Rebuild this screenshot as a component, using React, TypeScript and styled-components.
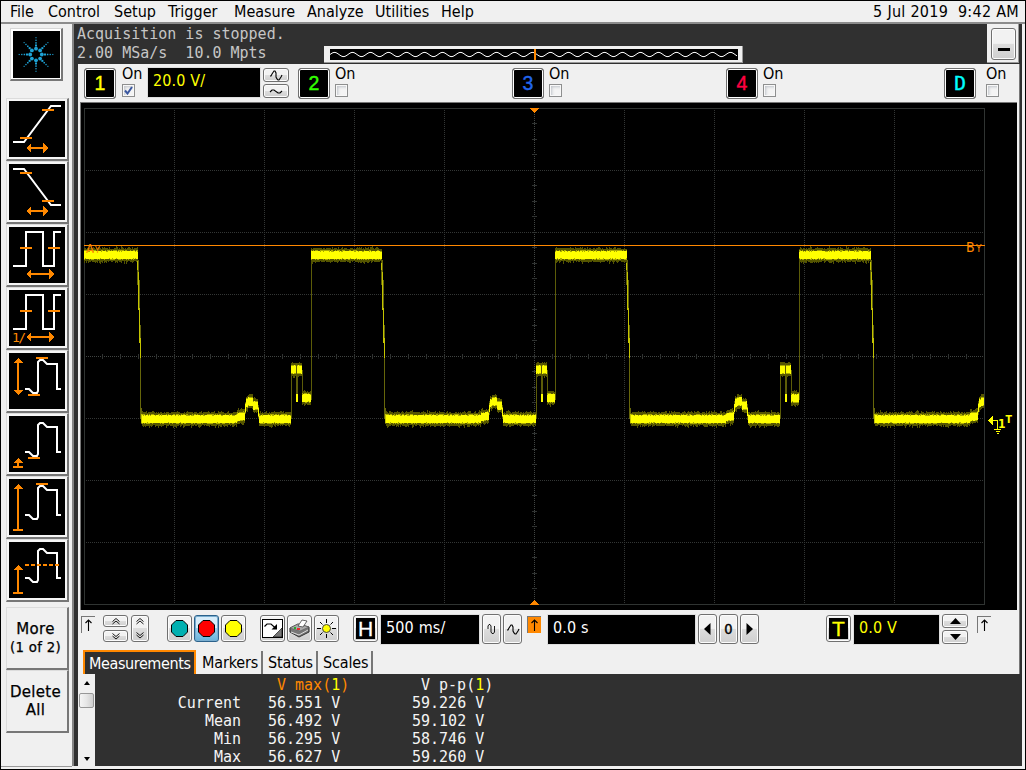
import React from 'react';
import styled, { createGlobalStyle, css } from 'styled-components';

const ui = '"DejaVu Sans Condensed", "DejaVu Sans", sans-serif';
const mono = '"DejaVu Sans Mono", monospace';
const orange = '#ff8800';
const dark = '#303030';
const face = '#f0f0f0';

const Global = createGlobalStyle`
  *, *::before, *::after { box-sizing: border-box; }
  body { margin: 0; background: #000; overflow: hidden; }
  svg { display: block; flex: none; }
`;

const Frame = styled.div`
  width: 1026px; height: 770px; display: flex; flex-direction: column;
  border: 1px solid #000; background: ${face};
  font: 16px/20px ${ui}; font-stretch: condensed; color: #000; white-space: pre;
`;
const MenuBar = styled.nav`
  height: 23px; flex: none; display: grid; align-items: center;
  grid-template-columns: 38px 66px 54px 66px 73px 68px 66px 1fr auto;
  padding: 0 6px 0 9px; border-bottom: 2px solid #8c8c8c;
`;
const MenuItem = styled.span<{ $ls?: number }>`
  letter-spacing: ${p => p.$ls ?? 0}px; line-height: 21px;
`;
const Body = styled.div`height: 742px; display: flex; flex: none;`;
const Sidebar = styled.aside`
  width: 71px; height: 743px; padding: 4px 0 0 5px; flex: none; border-bottom: 1px solid #999;
`;
const Main = styled.main`
  width: 950px; height: 742px; background: ${dark}; border-left: 2px solid #858585;
  display: flex; flex-direction: column;
`;
const LogoButton = styled.div`
  width: 53px; height: 53px; margin: 0 0 17px 4px; padding: 2px;
  border: 1px solid #d8d8d8; border-right: 2px solid #777; border-bottom: 2px solid #777;
  background: #fff;
`;
const SideButton = styled.div`
  width: 63px; height: 63px; padding: 2px; background: #f6f6f6;
  border: 1px solid #dcdcdc; border-right: 2px solid #777; border-bottom: 2px solid #777;
`;
const SideIcon = styled.div`width: 56px; height: 56px; background: #000;`;
const TextButton = styled.div<{ $gap?: boolean }>`
  width: 63px; height: 63px; margin-top: ${p => (p.$gap ? 5 : 0)}px; padding: 12px 3px 0 0;
  border: 1px solid #dcdcdc; border-right: 2px solid #777; border-bottom: 2px solid #777;
  text-align: center; font: 15px/18px "DejaVu Sans", sans-serif; -webkit-text-stroke: 0.25px #000;
  letter-spacing: 0.3px;
`;
const Small = styled.div`font-size: 13.3px; line-height: 20px;`;

const Status = styled.header`height: 40px; flex: none; display: flex;`;
const StatusText = styled.div`
  width: 250px; padding: 1px 0 0 3px; font: 15px/19px ${mono}; color: #c6c6c6;
`;
const Overview = styled.div`
  width: 419px; height: 17px; margin-top: 22px; padding: 3px 0 0 6px;
  background: ${face}; border-right: 1px solid #999; border-bottom: 1px solid #999;
`;
const MinimizeBox = styled.div`
  width: 32px; height: 39px; margin-left: 244px; padding: 4px; background: ${face};
  border-right: 1px solid #999; border-bottom: 1px solid #999;
`;
const Panel = styled.section`
  width: 942px; height: 610px; margin-left: 4px; flex: none; background: ${face};
  border-right: 1px solid #777;
`;
const bevel = css`
  border: 1px solid #707070; border-radius: 3px;
  box-shadow: inset 0 0 0 1px #fcfcfc;
  background: linear-gradient(#f2f2f2 0 48%, #dddddd 50%, #cfcfcf);
`;
const PushButton = styled.div<{ $w: number; $h: number; $ml?: number; $active?: boolean }>`
  ${bevel}
  width: ${p => p.$w}px; height: ${p => p.$h}px; margin-left: ${p => p.$ml ?? 0}px;
  display: flex; align-items: center; justify-content: center; flex: none;
  ${p => p.$active && css`
    border-color: #2c628b; box-shadow: inset 0 0 0 1px #7aaed0;
    background: linear-gradient(#d8edfa 0 48%, #9ed0ee 50%, #68b3db);
  `}
`;
const ChannelBar = styled.div`height: 38px; display: flex; padding: 4px 0 0 6px;`;
const ChannelButton = styled.div<{ $c: string; $ml?: number; $mono?: boolean }>`
  width: 32px; height: 31px; margin-left: ${p => p.$ml ?? 0}px; flex: none;
  border: 1px solid #707070; border-radius: 3px; background: #000;
  box-shadow: inset 0 0 0 1px #fff; color: ${p => p.$c};
  font: 19.5px/29px ${p => (p.$mono ? mono : '"Liberation Sans", Arial, sans-serif')};
  text-align: center; -webkit-text-stroke: 0.4px ${p => p.$c};
`;
const Enable = styled.div<{ $ml: number }>`
  width: 26px; margin-left: ${p => p.$ml}px; margin-top: -5px; flex: none; line-height: 21px;
`;
const Check = styled.div`
  width: 13px; height: 13px; border: 1px solid #8e8f8f; padding: 1px;
  background: #f4f4f4; box-shadow: inset 0 0 0 1px #f8f8f8, inset 2px 2px 3px #bfc3c9;
`;
const Readout = styled.div<{ $w: number; $h?: number; $ml?: number; $c?: string }>`
  width: ${p => p.$w}px; height: ${p => p.$h ?? 29}px; margin-left: ${p => p.$ml ?? 0}px;
  flex: none; background: #000; color: ${p => p.$c ?? '#fff'}; padding: 1px 5px;
  box-shadow: 0 0 0 1px #dedede; line-height: 23px; letter-spacing: 0.15px;
`;
const Stack = styled.div<{ $ml: number; $gap: number }>`
  margin-left: ${p => p.$ml}px; display: flex; flex-direction: column; gap: ${p => p.$gap}px;
`;
const ScopeArea = styled.div`
  width: 937px; height: 508px; margin-left: 2px; background: #000;
  border-left: 1px solid #777; border-top: 1px solid #777;
`;
const Toolbar = styled.div`height: 40px; display: flex; align-items: flex-start; padding: 4px 0 0 3px;`;
const Lower = styled.div`margin-top: 1px; display: flex;`;
const Corner = styled.div<{ $ml?: number; $bg?: string }>`
  width: 14px; height: 17px; margin: 2px 0 0 ${p => p.$ml ?? 0}px; flex: none;
  border-top: 1px solid #777; border-left: 1px solid #777; background: ${p => p.$bg ?? 'transparent'};
`;
const Letter = styled.div<{ $fg: string }>`
  width: 19px; height: 21px; background: #000; color: ${p => p.$fg}; text-align: center;
  font: 21px/22px "Liberation Sans", Arial, sans-serif; -webkit-text-stroke: 0.3px ${p => p.$fg};
`;
const Zero = styled.span`font: 14.5px/20px ${ui}; font-stretch: condensed; -webkit-text-stroke: 0.4px #000;`;
const Tabs = styled.div`height: 24px; display: flex; padding-left: 5px;`;
const Tab = styled.div<{ $w: number; $active?: boolean }>`
  width: ${p => p.$w}px; margin-top: ${p => (p.$active ? 0 : 1)}px; line-height: 23px; flex: none;
  padding-left: ${p => (p.$active ? 4 : 5)}px; letter-spacing: -0.15px;
  border-right: 2px solid #777;
  ${p => p.$active && css`
    background: ${dark}; color: #fff; border: 2px solid ${orange}; border-bottom: 0; margin-right: 1px;
    letter-spacing: -0.4px;
  `}
`;
const Results = styled.section`height: 92px; display: flex; padding-left: 4px;`;
const ScrollBar = styled.div`
  width: 17px; height: 92px; background: ${face}; padding: 7px 0 5px; display: flex;
  flex-direction: column; align-items: center; justify-content: space-between;
`;
const Thumb = styled.div`
  width: 15px; height: 15px; border: 1px solid #979797; border-radius: 2px; margin-bottom: 42px;
  background: linear-gradient(90deg, #f5f5f5, #e6e6e6 50%, #cfcfcf);
`;
const ResultGrid = styled.div`
  display: grid; grid-template-columns: 146px 144px 144px; grid-auto-rows: 18px;
  padding-top: 2px; font: 15px/18px ${mono}; color: #f4f4f4;
`;
const RowLabel = styled.div`text-align: right;`;
const Value = styled.div<{ $head?: boolean; $sel?: boolean }>`
  padding-left: ${p => (p.$head ? 36 : 27)}px; color: ${p => (p.$sel ? orange : 'inherit')};
`;
const Src = styled.span`color: #ffff00;`;

/* ---- measurement icons ---- */
const HArrow = ({ a, b }: { a: number; b: number }) => (
  <g fill={orange} shapeRendering="crispEdges">
    <rect x={a + 3} y="46" width={b - a - 6} height="2" />
    <path d={`M${a} 47l5-5v10zM${b} 47l-5-5v10z`} />
  </g>
);
const UpArrow = ({ top, both }: { top: number; both?: boolean }) => (
  <g fill={orange} shapeRendering="crispEdges">
    <rect x="8" y={top + 2} width="2" height={(both ? 40 : 51) - top - 2} />
    <path d={`M9 ${top}l5 5h-10z`} />
    {both ? <path d="M9 42l5-5h-10z" /> : <rect x="4" y="50" width="10" height="2" />}
  </g>
);
const Bar = ({ x, y }: { x: number; y: number }) => (
  <rect x={x} y={y - 1} width="12" height="2" fill={orange} />
);
const White = ({ d }: { d: string }) => <path d={d} stroke="#fff" strokeWidth="2" fill="none" />;
const pulse = 'M16 36H20L24 40H28L29 38V9L31 7H34L38 11H48V36H52';
const square = 'M4 39H17V5H34V39H45V5H52';

const icons: React.ReactNode[] = [
  <><White d="M4 41H15L42 5H52" /><Bar x={11} y={37} /><Bar x={33} y={9} /><HArrow a={17} b={39} /></>,
  <><White d="M4 5H15L42 41H52" /><Bar x={11} y={9} /><Bar x={33} y={37} /><HArrow a={17} b={39} /></>,
  <><White d={square} /><Bar x={11} y={21} /><Bar x={39} y={21} /><HArrow a={17} b={45} /></>,
  <><White d={square} /><Bar x={11} y={21} /><Bar x={39} y={21} /><HArrow a={17} b={45} />
    <text x="3" y="52" fill={orange} fontSize="13" fontFamily={mono} textLength="14">1/</text></>,
  <><White d={pulse} /><Bar x={27} y={5} /><Bar x={19} y={42} /><UpArrow top={5} both /></>,
  <><White d={pulse} /><Bar x={19} y={42} /><UpArrow top={42} /></>,
  <><White d={pulse} /><Bar x={27} y={5} /><UpArrow top={5} /></>,
  <><White d={pulse} /><path d="M16 23H51" stroke={orange} strokeWidth="2" strokeDasharray="4 2" /><UpArrow top={23} /></>,
];

const Logo = () => (
  <svg width="47" height="47" viewBox="-23.5 -23.5 47 47">
    <rect x="-23.5" y="-23.5" width="47" height="47" fill="#000" />
    {Array.from({ length: 8 }, (_, i) => {
      const a = (i * Math.PI) / 4;
      return [5.8, 9, 11.6, 14.2, 16.8].map((r, j) => {
        const s = [3.8, 2, 1.5, 1.3, 1.1][j];
        const x = Math.cos(a) * r - 0.5, y = Math.sin(a) * r;
        return j === 0
          ? <circle key={`${i}${j}`} cx={x} cy={y} r={s / 2} fill="#1ea3d6" />
          : <rect key={`${i}${j}`} x={x - s / 2} y={y - s / 2} width={s} height={s} fill="#1ea3d6" />;
      });
    })}
  </svg>
);

/* ---- waveform ---- */
/* fall: falling edge x, step: x of the double step, rise: rising edge x */
const cycles = [
  { fall: 138, step: 291, rise: 311 },
  { fall: 382, step: 535.5, rise: 555 },
  { fall: 627, step: 780, rise: 799 },
  { fall: 871, step: 1024, rise: 1043 },
];
let seed = 7;
const rnd = () => {
  seed = (seed * 1103515245 + 12345) % 2147483648;
  return seed / 2147483648;
};
const levelAt = (x: number): number | null => {
  const c = [...cycles].reverse().find(k => k.fall <= x);
  if (!c) return 255;
  const p = x - c.fall;
  if (p < 4) return null;
  if (p < 99) return 419;
  if (p < 107) return 417 - (p - 99) * 0.15;
  if (p < 108) return 408;
  if (p < 110) return 403;
  if (p < 115) return 401.5;
  if (p < 120) return 405.5;
  if (p < 121) return 412;
  if (x < c.step) return 419;
  const q = x - c.step;
  if (q < 5) return 369.5;
  if (q < 6) return null;
  if (q < 11) return 369.5;
  if (x < c.rise) return 398;
  return 255;
};
const trace = () => {
  let dim = '', mid = '', core = '';
  for (let x = 84; x < 984; x++) {
    const y = levelAt(x);
    if (y === null) continue;
    const up = 6 + rnd() * 1.7 + (rnd() > 0.85 ? 1 : 0);
    const dn = 6 + rnd() * 1.8 + (rnd() > 0.85 ? 1.5 : 0);
    dim += `M${x + 0.5} ${Math.round(y - up)}V${Math.round(y + dn)}`;
    mid += `M${x + 0.5} ${Math.round(y - 4 - rnd())}V${Math.round(y + 4 + rnd())}`;
    core += `M${x + 0.5} ${Math.round(y - 3.2 - rnd())}V${Math.round(y + 3.4 + rnd())}`;
  }
  return { dim, mid, core };
};
const wave = trace();

const Scope = () => (
  <svg width="936" height="507" viewBox="81 103 936 507" shapeRendering="crispEdges">
    <g stroke="#404442" fill="none">
      <rect x="84.5" y="108.5" width="900" height="496" stroke="#303432" />
      {Array.from({ length: 9 }, (_, i) => (
        <path key={i} d={`M${174.5 + i * 90} 110V604`} strokeDasharray="1 1" stroke={i === 4 ? '#404442' : '#333635'} />
      ))}
      {Array.from({ length: 7 }, (_, i) => (
        <path key={i} d={`M86 ${170.5 + i * 62}H984`} strokeDasharray="1 1" stroke={i === 3 ? '#404442' : '#333635'} />
      ))}
      {Array.from({ length: 49 }, (_, i) => <path key={i} stroke="#303332" d={`M${102.5 + i * 18} 354V359`} />)}
      {Array.from({ length: 31 }, (_, i) => <path key={i} stroke="#303332" d={`M532 ${Math.floor(108 + (i + 1) * 15.5) + 0.5}H537`} />)}
    </g>
    <path d="M530 108h9l-4.500 5zM530 605h9l-4.500 -5z" fill={orange} />
    {cycles.map(({ fall: f, step, rise }) => {
      const s = Math.ceil(step);
      return (
        <g key={f} fill="none">
          <path d={`M${f - 0.5} 257V285M${f + 0.5} 260V300M${f + 1.5} 280V342M${f + 2.5} 325V419M${f + 3.5} 408V424`} stroke="#66660a" />
          <path d={`M${f - 0.5} 257V270M${f + 0.5} 272V310M${f + 1.5} 308V343M${f + 2.5} 338V358M${f + 3.5} 414V423`} stroke="#c4c400" />
          {rise < 984 && (
            <path d={`M${s + 0.5} 370V419M${s + 5.500} 363V402M${s + 6.5} 363V402M${s + 11.5} 370V398M${rise + 0.5} 255V400`} stroke="#5c5c08" />
          )}
        </g>
      );
    })}
    <path d={wave.dim} stroke="#555500" />
    <path d={wave.mid} stroke="#aaaa00" />
    <path d={wave.core} stroke="#ffff00" />
    {cycles.slice(0, 3).map(c => <path key={c.fall} d={`M${Math.ceil(c.step) + 6} 394V402`} stroke="#ffff00" strokeWidth="2" />)}
    <path d="M84 245.500H985" stroke={orange} />
    <g fill={orange} fontFamily={'"DejaVu Sans", sans-serif'} fontSize="13">
      <text x="86" y="253">A</text><text x="95" y="253" fontSize="9">Y</text>
      <text x="966" y="252" fontSize="14">B</text><text x="976" y="252" fontSize="10">Y</text>
    </g>
    <g stroke="#ffff00" fill="none">
      <path d="M993 420.500H997.500V429M994 429.500H1001M995.500 431.500H999.500M997 433.500H998.500" />
      <path d="M988 420.500l5-5v10z" fill="#ffff00" stroke="none" />
    </g>
    <g fill="#ffff00" fontFamily={'"DejaVu Sans", sans-serif'} fontWeight="bold">
      <text x="998" y="428" fontSize="12">1</text>
      <text x="1005.500" y="423" fontSize="10.500">T</text>
    </g>
  </svg>
);

const overviewPath = () => {
  let d = '';
  for (let x = 0; x <= 407; x++) d += `${x ? 'L' : 'M'}${x} ${(5.5 - 2.1 * Math.cos(((x - 22.5) * 2 * Math.PI) / 18)).toFixed(2)}`;
  return d;
};

/* ---- button glyphs ---- */
const Glyph = ({ w, h, d, fill, sw = 1.1 }: { w: number; h: number; d: string; fill?: boolean; sw?: number }) => (
  <svg width={w} height={h} viewBox={`0 0 ${w} ${h}`}>
    <path d={d} fill={fill ? '#000' : 'none'} stroke={fill ? 'none' : '#000'} strokeWidth={sw} />
  </svg>
);
const BIG_SINE = 'M1 6H2L3 4L5 1H6L7 3V7L8 9L9 10H10L12 7L13 5';
const SMALL_SINE = 'M1 4L3 2H5L9 5H11L13 3';
const chevUp = 'M1.500 4.500L5 1.500L8.500 4.500M1.500 7L5 4L8.500 7';
const chevDown = 'M1.500 1.500L5 4.500L8.500 1.500M1.500 4L5 7L8.500 4';
const ArrowUp = () => <Glyph w={13} h={16} d="M6.500 14V4M3.500 6L6.500 3L9.500 6" />;
const Octagon = ({ c }: { c: string }) => (
  <svg width="17" height="17" viewBox="0 0 17 17">
    <path d="M5 .5H12L16.500 5V12L12 16.500H5L.5 12V5z" fill={c} stroke="#000" />
  </svg>
);

const ChannelToggle = ({ ml, on }: { ml: number; on?: boolean }) => (
  <Enable $ml={ml}>
    On
    <Check>
      {on && <svg width="9" height="9" viewBox="0 0 9 9"><path d="M1 4.500L3.500 7.500L8 1" fill="none" stroke="#3b58a0" strokeWidth="2" /></svg>}
    </Check>
  </Enable>
);

const rows = [
  ['Current', '56.551 V', '59.226 V'],
  ['Mean', '56.492 V', '59.102 V'],
  ['Min', '56.295 V', '58.746 V'],
  ['Max', '56.627 V', '59.260 V'],
];

export default function App() {
  return (
    <Frame>
      <Global />
      <MenuBar>
        {['File', 'Control', 'Setup', 'Trigger', 'Measure', 'Analyze', 'Utilities', 'Help'].map(m => (
          <MenuItem key={m}>{m}</MenuItem>
        ))}
        <MenuItem $ls={0.28}>5 Jul 2019  9:42 AM</MenuItem>
      </MenuBar>
      <Body>
        <Sidebar>
          <LogoButton><Logo /></LogoButton>
          {icons.map((icon, i) => (
            <SideButton key={i}><SideIcon><svg width="56" height="56">{icon}</svg></SideIcon></SideButton>
          ))}
          <TextButton $gap>More<Small>(1 of 2)</Small></TextButton>
          <TextButton>{'Delete\nAll'}</TextButton>
        </Sidebar>
        <Main>
          <Status>
            <StatusText>{'Acquisition is stopped.\n2.00 MSa/s  10.0 Mpts'}</StatusText>
            <Overview>
              <svg width="408" height="11">
                <rect width="408" height="11" fill="#000" />
                <path d={overviewPath()} stroke="#fff" fill="none" />
                <rect x="204" width="2" height="11" fill={orange} />
              </svg>
            </Overview>
            <MinimizeBox>
              <PushButton $w={25} $h={32}><Glyph w={12} h={14} d="M0 11h12v3H0z" fill /></PushButton>
            </MinimizeBox>
          </Status>
          <Panel>
            <ChannelBar>
              <ChannelButton $c="#ffff00">1</ChannelButton>
              <ChannelToggle ml={6} on />
              <Readout $w={112} $c="#ffff00">20.0 V/</Readout>
              <Stack $ml={3} $gap={2}>
                <PushButton $w={26} $h={14}><Glyph w={14} h={11} d={BIG_SINE} /></PushButton>
                <PushButton $w={26} $h={14}><Glyph w={14} h={7} d={SMALL_SINE} /></PushButton>
              </Stack>
              <ChannelButton $c="#33ff00" $ml={9}>2</ChannelButton>
              <ChannelToggle ml={5} />
              <ChannelButton $c="#2266ee" $ml={151}>3</ChannelButton>
              <ChannelToggle ml={5} />
              <ChannelButton $c="#ff0040" $ml={151}>4</ChannelButton>
              <ChannelToggle ml={5} />
              <ChannelButton $c="#00ffff" $ml={155} $mono>D</ChannelButton>
              <ChannelToggle ml={10} />
            </ChannelBar>
            <ScopeArea><Scope /></ScopeArea>
            <Toolbar>
              <Corner><ArrowUp /></Corner>
              <Lower>
                <Stack $ml={8} $gap={3}>
                  <PushButton $w={25} $h={12}><Glyph w={10} h={9} d={chevUp} sw={0.9} /></PushButton>
                  <PushButton $w={25} $h={12}><Glyph w={10} h={9} d={chevDown} sw={0.9} /></PushButton>
                </Stack>
                <PushButton $w={18} $h={27} $ml={3}>
                  <Stack $ml={0} $gap={5}><Glyph w={10} h={9} d={chevUp} sw={0.9} /><Glyph w={10} h={9} d={chevDown} sw={0.9} /></Stack>
                </PushButton>
                <PushButton $w={25} $h={27} $ml={18}><Octagon c="#00b0b0" /></PushButton>
                <PushButton $w={25} $h={27} $ml={2} $active><Octagon c="#ff0000" /></PushButton>
                <PushButton $w={25} $h={27} $ml={2}><Octagon c="#ffff00" /></PushButton>
                <PushButton $w={25} $h={27} $ml={14}>
                  <svg width="21" height="19" viewBox="0 0 21 19">
                    <rect x=".5" y=".5" width="20" height="18" fill="#fff" stroke="#000" />
                    <path d="M20 9V18H11z" fill="#777" stroke="#000" strokeWidth=".6" />
                    <path d="M2.500 7.500L5 5H9L14 9.500" stroke="#000" fill="none" strokeWidth="1.200" />
                    <path d="M15 5V10.500H9.500z" fill="#000" />
                  </svg>
                </PushButton>
                <PushButton $w={25} $h={27} $ml={2}>
                  <svg width="21" height="19" viewBox="0 0 21 19">
                    <path d="M1 9L9 5L20 8V13L10 18L1 13z" fill="#777" stroke="#333" />
                    <path d="M1 9L9 5L20 8L11 12z" fill="#aaa" stroke="#555" strokeWidth=".5" />
                    <path d="M9 7L13 1L18 2L14 8z" fill="#fff" stroke="#444" strokeWidth=".8" />
                    <path d="M2 13L10 16L19 11" stroke="#ddd" fill="none" />
                    <path d="M8 10h3" stroke="#f00" strokeWidth="1.500" /><path d="M5 9h2" stroke="#0a0" strokeWidth="1.500" />
                  </svg>
                </PushButton>
                <PushButton $w={25} $h={27} $ml={2}>
                  <svg width="21" height="21" viewBox="0 0 21 21">
                    <path d="M10.500 1V5M10.500 16V20M1 10.500H5M16 10.500H20M4 4L6.500 6.500M14.500 14.500L17 17M17 4L14.500 6.500M6.500 14.500L4 17" stroke="#000" />
                    <circle cx="10.500" cy="10.500" r="4" fill="#ff0" stroke="#444" />
                  </svg>
                </PushButton>
                <PushButton $w={25} $h={27} $ml={14}><Letter $fg="#ffffff">H</Letter></PushButton>
              </Lower>
              <Lower><Readout $w={98} $ml={3}>500 ms/</Readout></Lower>
              <PushButton $w={19} $h={30} $ml={3}><Glyph w={10} h={12} d="M1 6V3L2 1.500H3L4 3V9L5 10.500H6.500L7.500 9V3" sw={0.9} /></PushButton>
              <PushButton $w={19} $h={30} $ml={2}><Glyph w={14} h={11} d={BIG_SINE} /></PushButton>
              <Corner $ml={5} $bg={orange}><ArrowUp /></Corner>
              <Lower><Readout $w={147} $ml={7}>0.0 s</Readout></Lower>
              <PushButton $w={19} $h={30} $ml={3}><Glyph w={7} h={12} d="M6.500 0V12L0 6z" fill /></PushButton>
              <PushButton $w={19} $h={30} $ml={2}><Zero>0</Zero></PushButton>
              <PushButton $w={19} $h={30} $ml={2}><Glyph w={7} h={12} d="M.5 0V12L7 6z" fill /></PushButton>
              <Lower>
                <PushButton $w={25} $h={27} $ml={67}><Letter $fg="#ffff00">T</Letter></PushButton>
                <Readout $w={85} $ml={3} $c="#ffff00">0.0 V</Readout>
              </Lower>
              <Stack $ml={3} $gap={2}>
                <PushButton $w={26} $h={14}><Glyph w={11} h={6} d="M0 6H11L5.500 0z" fill /></PushButton>
                <PushButton $w={26} $h={14}><Glyph w={11} h={6} d="M0 0H11L5.500 6z" fill /></PushButton>
              </Stack>
              <Corner $ml={9}><ArrowUp /></Corner>
            </Toolbar>
            <Tabs>
              <Tab $w={113} $active>Measurements</Tab>
              <Tab $w={66}>Markers</Tab>
              <Tab $w={55}>Status</Tab>
              <Tab $w={55}>Scales</Tab>
            </Tabs>
          </Panel>
          <Results>
            <ScrollBar>
              <Glyph w={6} h={4} d="M0 4H6L3 0z" fill />
              <Thumb />
              <Glyph w={6} h={4} d="M0 0H6L3 4z" fill />
            </ScrollBar>
            <ResultGrid>
              <RowLabel />
              <Value $head $sel>V max(<Src>1</Src>)</Value>
              <Value $head>V p-p(<Src>1</Src>)</Value>
              {rows.map(r => (
                <React.Fragment key={r[0]}>
                  <RowLabel>{r[0]}</RowLabel><Value>{r[1]}</Value><Value>{r[2]}</Value>
                </React.Fragment>
              ))}
            </ResultGrid>
          </Results>
        </Main>
      </Body>
    </Frame>
  );
}
